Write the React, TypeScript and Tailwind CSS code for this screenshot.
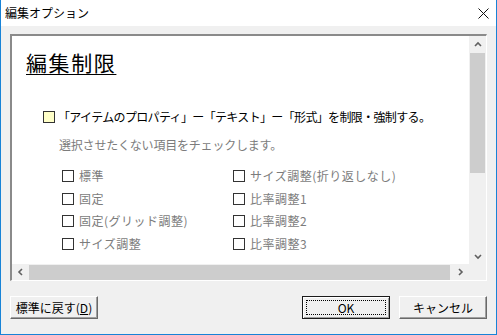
import React from 'react';

const font = { fontFamily: '"Noto Sans CJK JP", "Noto Sans", sans-serif' };

const leftItems = ['標準', '固定', '固定(グリッド調整)', 'サイズ調整'];
const rightItems = ['サイズ調整(折り返しなし)', '比率調整1', '比率調整2', '比率調整3'];

const Box = ({ label }: { label: string }) => (
  <div className="flex items-center h-[22.5px]">
    <span className="w-[12px] h-[12px] border border-[#333] bg-white shrink-0" />
    <span className="ml-[5px] text-[12px] leading-none text-[#7c7c7c] tracking-[0.5px]">{label}</span>
  </div>
);

const Chevron = ({ dir }: { dir: 'up' | 'down' | 'left' | 'right' }) => {
  const d = {
    up: 'M2 6 L5 3 L8 6',
    down: 'M2 4 L5 7 L8 4',
    left: 'M6 2 L3 5 L6 8',
    right: 'M4 2 L7 5 L4 8',
  }[dir];
  return (
    <svg width="10" height="10" viewBox="0 0 10 10">
      <path d={d} fill="none" stroke="#606060" strokeWidth="1.6" />
    </svg>
  );
};

const App = () => {
  return (
    <div
      className="w-[497px] h-[335px] bg-[#f0f0f0] border-x border-b border-[#1883d7] flex flex-col select-none"
      style={font}
    >
      {/* title bar */}
      <div className="h-[26px] bg-white flex items-center justify-between shrink-0">
        <span className="pl-[4px] text-[12px] text-black leading-none">編集オプション</span>
        <svg width="11" height="11" viewBox="0 0 11 11" className="mr-[7px]">
          <path d="M0.5 0.5 L10.5 10.5 M10.5 0.5 L0.5 10.5" stroke="#111" strokeWidth="1" />
        </svg>
      </div>

      <div className="flex-1 flex flex-col px-[9px] pt-[8px]">
        {/* sunken panel */}
        <div className="h-[247px] border-t-2 border-l-2 border-r border-b border-t-[#8a8a8a] border-l-[#8a8a8a] border-r-white border-b-white flex flex-col">
          <div className="flex flex-1 min-h-0">
            <div className="flex-1 bg-white overflow-hidden pl-[14px] pt-[15px]">
              <div className="text-[21px] leading-[22px] tracking-[1.6px] text-black underline underline-offset-[3px] decoration-1 w-fit">
                編集制限
              </div>
              <div className="flex items-center mt-[38px] pl-[17px]">
                <span className="w-[12px] h-[12px] border border-[#333] bg-[#ffffc8] shrink-0" />
                <span className="ml-[3px] text-[12px] leading-none text-black tracking-[-0.65px]">
                  「アイテムのプロパティ」ー「テキスト」ー「形式」を制限・強制する。
                </span>
              </div>
              <div className="mt-[16px] pl-[33px] text-[12px] leading-none text-[#7c7c7c] tracking-[-0.2px]">
                選択させたくない項目をチェックします。
              </div>
              <div className="flex mt-[14px] pl-[36px]">
                <div className="w-[171px] flex flex-col">
                  {leftItems.map((item) => (
                    <Box key={item} label={item} />
                  ))}
                </div>
                <div className="flex flex-col">
                  {rightItems.map((item) => (
                    <Box key={item} label={item} />
                  ))}
                </div>
              </div>
            </div>
            {/* vertical scrollbar */}
            <div className="w-[17px] bg-[#f0f0f0] flex flex-col items-center">
              <div className="h-[17px] flex items-center justify-center">
                <Chevron dir="up" />
              </div>
              <div className="w-[15px] h-[120px] bg-[#cdcdcd]" />
              <div className="flex-1" />
              <div className="h-[17px] flex items-center justify-center">
                <Chevron dir="down" />
              </div>
            </div>
          </div>
          {/* horizontal scrollbar */}
          <div className="h-[16px] flex shrink-0">
            <div className="flex-1 bg-[#f0f0f0] flex items-center">
              <div className="w-[17px] flex items-center justify-center">
                <Chevron dir="left" />
              </div>
              <div className="flex-1 h-[15px] bg-[#cdcdcd]" />
              <div className="w-[19px] flex items-center justify-center">
                <Chevron dir="right" />
              </div>
            </div>
            <div className="w-[17px] bg-[#f0f0f0]" />
          </div>
        </div>

        {/* buttons */}
        <div className="flex items-center mt-[15px]">
          <button className="w-[88px] h-[23px] bg-[#f0f0f0] border border-t-white border-l-white border-r-[#696969] border-b-[#696969] shadow-[inset_-1px_-1px_0_#a0a0a0] text-[12px] leading-none text-black">
            標準に戻す(<span className="underline">D</span>)
          </button>
          <div className="flex-1" />
          <button className="w-[88px] h-[23px] bg-[#f0f0f0] border border-[#1a1a1a] shadow-[inset_1px_1px_0_#fff,inset_-1px_-1px_0_#a0a0a0] p-[3px] text-[12px] leading-none text-black">
            <div className="w-full h-full border border-dotted border-black flex items-center justify-center">OK</div>
          </button>
          <button className="ml-[9px] w-[88px] h-[23px] bg-[#f0f0f0] border border-t-white border-l-white border-r-[#696969] border-b-[#696969] shadow-[inset_-1px_-1px_0_#a0a0a0] text-[12px] leading-none text-black">
            キャンセル
          </button>
        </div>
      </div>
    </div>
  );
};

export default App;
